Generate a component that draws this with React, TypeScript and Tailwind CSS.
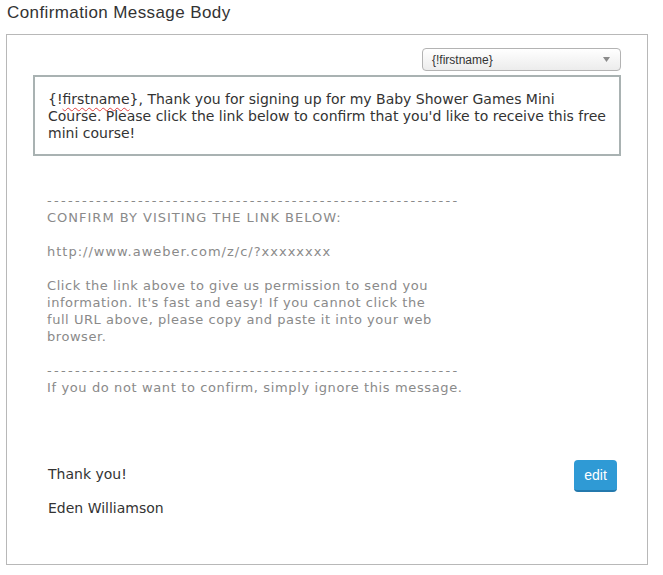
import React from "react";

const DASHES = "-".repeat(59);

function Dashes() {
  return <div className="whitespace-nowrap tracking-[2.3px]">{DASHES}</div>;
}

function FieldSelect({ value }: { value: string }) {
  return (
    <div className="ml-auto flex h-[23px] w-[199px] items-center justify-between rounded-[4px] border border-[#b3b3b3] bg-gradient-to-b from-white to-[#ececec] pl-[9px] pr-[10px] font-['Liberation_Sans',Arial,sans-serif] text-[12px] text-[#333]">
      <span>{value}</span>
      <svg width="7" height="5" viewBox="0 0 7 5">
        <path d="M0 0 L7 0 L3.5 5 Z" fill="#8a8a8a" />
      </svg>
    </div>
  );
}

export default function App(): JSX.Element {
  return (
    <div className="h-[575px] w-[663px] bg-white">
      <h2 className="pl-[7px] pt-[2px] font-['Liberation_Sans',Arial,sans-serif] text-[17px] leading-[22px] tracking-[0.4px] text-[#333]">
        Confirmation Message Body
      </h2>
      <div className="ml-[6px] mt-[10px] h-[531px] w-[642px] border border-[#b8b8b8] px-[26px] pt-[13px]">
        <FieldSelect value="{!firstname}" />
        <div className="mt-[4px] whitespace-nowrap border-2 border-[#a9b2b2] px-[13px] pb-[12px] pt-[14px] font-['DejaVu_Sans',sans-serif] text-[14px] leading-[17px] text-[#333]">
          <span>
            {"{!"}
            <span className="underline decoration-[#e04040] decoration-wavy decoration-1 underline-offset-[3px]">
              firstname
            </span>
            {"}"}
          </span>
          , Thank you for signing up for my Baby Shower Games Mini
          <br />
          Course. Please click the link below to confirm that you'd like to
          receive this free
          <br />
          mini course!
        </div>

        <div className="mt-[36px] whitespace-nowrap pl-[14px] font-['DejaVu_Sans',Verdana,sans-serif] text-[13px] leading-[17px] text-[#8a8a8a]">
          <Dashes />
          <p className="tracking-[1px]">CONFIRM BY VISITING THE LINK BELOW:</p>
          <p className="mt-[17px] tracking-[1px]">
            http://www.aweber.com/z/c/?xxxxxxxx
          </p>
          <p className="mt-[17px] tracking-[0.55px]">
            Click the link above to give us permission to send you
            <br />
            information. It's fast and easy! If you cannot click the
            <br />
            full URL above, please copy and paste it into your web
            <br />
            browser.
          </p>
          <div className="mt-[17px]">
            <Dashes />
          </div>
          <p className="tracking-[0.62px]">
            If you do not want to confirm, simply ignore this message.
          </p>
        </div>

        <div className="mt-[64px] flex items-start justify-between pl-[15px] font-['DejaVu_Sans',sans-serif] text-[14px] leading-[17px] text-[#333]">
          <div className="pt-[6px]">
            <p>Thank you!</p>
            <p className="mt-[17px]">Eden Williamson</p>
          </div>
          <button className="mr-[4px] h-[32px] w-[43px] rounded-[4px] border-b-2 border-[#2479ad] bg-[#2f9ad5] font-['Liberation_Sans',Arial,sans-serif] text-[14px] text-white">
            edit
          </button>
        </div>
      </div>
    </div>
  );
}
